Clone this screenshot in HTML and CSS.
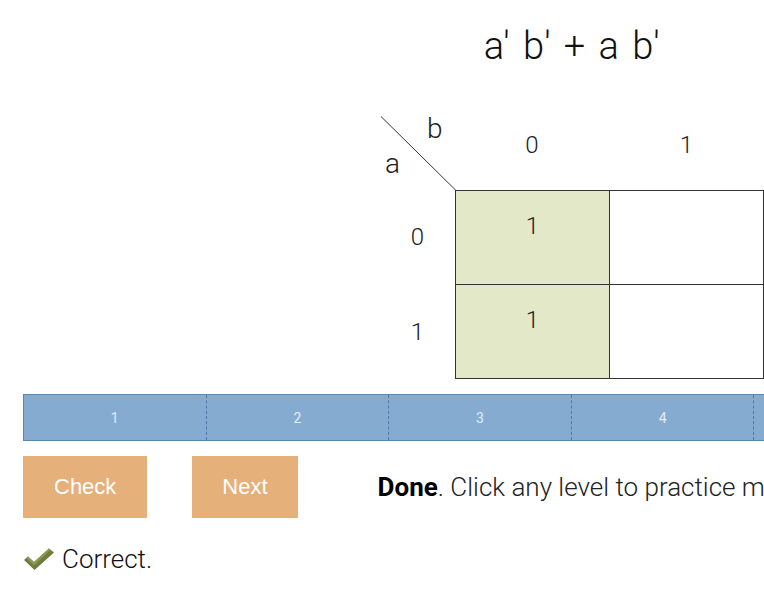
FILE: index.html
```html
<!DOCTYPE html>
<html lang="en">
<head>
  <meta charset="UTF-8" />
  <meta name="viewport" content="width=device-width, initial-scale=1.0" />
  <title>K-map practice</title>
  <link rel="stylesheet" href="styles.css">
</head>
<body>
  <div class="page">
    <div class="expression">a' b' + a b'</div>

    <div class="kmap">
      <div class="corner">
        <svg class="diagonal" width="76" height="75" viewBox="0 0 76 75">
          <line x1="1" y1="0.5" x2="76" y2="74.5" stroke="#333" stroke-width="1" />
        </svg>
        <span class="var-b">b</span>
        <span class="var-a">a</span>
      </div>
      <div class="col-head">0</div>
      <div class="col-head">1</div>

      <div class="row-head">0</div>
      <div class="cell on">1</div>
      <div class="cell last-col"></div>

      <div class="row-head">1</div>
      <div class="cell on last-row">1</div>
      <div class="cell last-col last-row"></div>
    </div>

    <div class="levels">
      <div class="level">1</div>
      <div class="level">2</div>
      <div class="level">3</div>
      <div class="level">4</div>
      <div class="level">5</div>
    </div>

    <div class="actions">
      <button class="btn">Check</button>
      <button class="btn">Next</button>
      <div class="status"><strong>Done</strong>. Click any level to practice more.</div>
    </div>

    <div class="result">
      <svg class="tick" width="32" height="24" viewBox="0 0 32 24">
        <path d="M1 13 L5 9.5 L11 15 L26 1.5 L31 5.5 L11.5 23 Z" fill="#6d7c3b" />
        <path d="M5 9.5 L11 15 L26 1.5 L27.5 3 L11 18.5 L4 12 Z" fill="#8a9952" />
      </svg>
      <span>Correct.</span>
    </div>
  </div>
</body>
</html>
```

FILE: styles.css
```css
html, body { overflow: hidden; }
* { margin: 0; padding: 0; box-sizing: border-box; }
body {
  font-family: 'Roboto', sans-serif;
  font-weight: 300;
  background-color: white;
  color: #1a1a1a;
}
.page {
  padding-left: 23px;
  width: 1200px;
}
.expression {
  margin-left: 357px;
  width: 384px;
  padding-top: 24px;
  font-size: 38px;
  line-height: 44px;
  letter-spacing: 0.5px;
  word-spacing: 3px;
  text-align: center;
  color: #111;
}
.kmap {
  margin-left: 357px;
  margin-top: 48px;
  display: grid;
  grid-template-columns: 75px 154px 155px;
  grid-template-rows: 74px 94px 95px;
  font-size: 24px;
  color: #222;
}
.corner { position: relative; }
.diagonal { position: absolute; left: 0; top: 0; overflow: visible; }
.var-b, .var-a {
  position: absolute;
  font-size: 28px;
  line-height: 28px;
}
.var-b { left: 47px; top: -1px; }
.var-a { left: 5px; top: 34px; }
.col-head {
  display: flex;
  align-items: center;
  justify-content: center;
  padding-bottom: 16px;
}
.row-head {
  display: flex;
  align-items: center;
  justify-content: center;
}
.cell {
  border-left: 1px solid #333;
  border-top: 1px solid #333;
  text-align: center;
  padding-top: 21px;
}
.cell.on { background-color: #e3e8c9; }
.cell.last-col { border-right: 1px solid #333; }
.cell.last-row { border-bottom: 1px solid #333; }
.levels {
  margin-top: 15px;
  display: flex;
  height: 47px;
  background-color: #86abd1;
  border: 1px solid #5a85b0;
  width: max-content;
}
.level {
  width: 182.6px;
  display: flex;
  align-items: center;
  justify-content: center;
  font-size: 14px;
  font-weight: 400;
  color: #e4ecf4;
  border-right: 1px dashed #4f79a4;
}
.actions {
  margin-top: 15px;
  display: flex;
  align-items: center;
  gap: 45px;
}
.btn {
  height: 62px;
  padding: 0 31px;
  border: none;
  background-color: #e6b07b;
  color: white;
  font-family: 'Liberation Sans', Arial, sans-serif;
  font-size: 22px;
  cursor: pointer;
}
.btn + .btn { padding: 0 30px; }
.status {
  margin-left: 35px;
  font-size: 26px;
  white-space: nowrap;
  color: #222;
}
.status strong { font-weight: 700; color: #000; }
.result {
  margin-top: 26px;
  display: flex;
  align-items: center;
  gap: 7px;
  font-size: 26px;
  color: #111;
}
.tick { flex: none; }
```
